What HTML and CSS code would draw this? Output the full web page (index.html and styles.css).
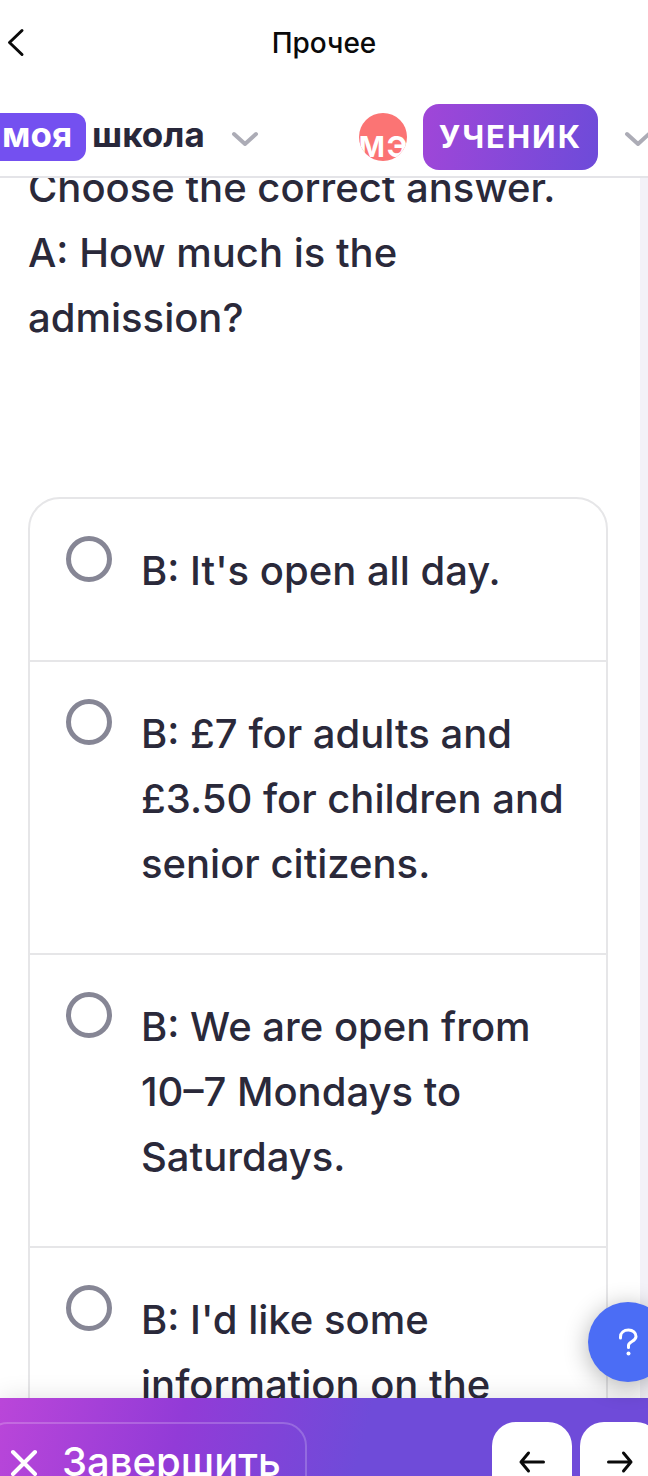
FILE: index.html
```html
<!DOCTYPE html>
<html lang="ru">
<head>
    <meta charset="UTF-8">
    <meta name="viewport" content="width=device-width, initial-scale=1.0">
    <title>Прочее</title>
    <link rel="stylesheet" href="styles.css">
</head>
<body>
    <div class="app">
        <header class="topbar">
            <button type="button" class="back" aria-label="Назад">
                <svg width="20" height="32" viewBox="0 0 20 32"><path d="M16 3.500L3.500 15.500L16 27.500"/></svg>
            </button>
            <h1>Прочее</h1>
        </header>

        <nav class="nav">
            <a href="#" class="logo"><span class="logo-badge">моя</span><span>школа</span></a>
            <button type="button" class="chevron" aria-label="Меню">
                <svg width="28" height="18" viewBox="0 0 28 18"><path d="M3 6L14 16L25 6"/></svg>
            </button>
            <div class="profile">
                <span class="avatar">МЭ</span>
                <span class="role">УЧЕНИК</span>
                <button type="button" class="chevron" aria-label="Профиль">
                    <svg width="28" height="18" viewBox="0 0 28 18"><path d="M3 6L14 16L25 6"/></svg>
                </button>
            </div>
        </nav>

        <main class="content">
            <div class="task">
                <p class="question">Choose the correct answer.<br>A: How much is the admission?</p>
                <form class="answers">
                    <label class="answer">
                        <input type="radio" name="answer" value="1">
                        <span>B: It's open all day.</span>
                    </label>
                    <label class="answer">
                        <input type="radio" name="answer" value="2">
                        <span>B: £7 for adults and £3.50 for children and senior citizens.</span>
                    </label>
                    <label class="answer">
                        <input type="radio" name="answer" value="3">
                        <span>B: We are open from 10–7 Mondays to Saturdays.</span>
                    </label>
                    <label class="answer">
                        <input type="radio" name="answer" value="4">
                        <span>B: I'd like some information on the</span>
                    </label>
                </form>
            </div>
        </main>

        <footer class="bottom">
            <button type="button" class="finish">
                <svg width="28" height="28" viewBox="0 0 28 28"><path d="M3 4L25 26M25 4L3 26"/></svg>
                Завершить
            </button>
            <div class="arrows">
                <button type="button" class="arrow" aria-label="Предыдущее задание">
                    <svg width="28" height="24" viewBox="0 0 28 24"><path d="M25.500 12H3M10.500 3L3 12L10.500 21"/></svg>
                </button>
                <button type="button" class="arrow" aria-label="Следующее задание">
                    <svg width="28" height="24" viewBox="0 0 28 24"><path d="M2.500 12H25M17.500 3L25 12L17.500 21"/></svg>
                </button>
            </div>
        </footer>

        <button type="button" class="help" aria-label="Помощь">
            <svg width="24" height="32" viewBox="0 0 24 32"><path d="M4.500 12V11C4.500 6.500 8 4 12.500 4S20 7 20 10.500C20 15.500 12.500 15.500 12.500 19.500V21.500"/><circle cx="12.500" cy="27.500" r="2"/></svg>
        </button>
    </div>
</body>
</html>
```

FILE: styles.css
```css
* {
    box-sizing: border-box;
}
body {
    margin: 0;
    font-family: Inter, "Liberation Sans", sans-serif;
    color: #2a293a;
    background: #f3f2f8;
}
button {
    padding: 0;
    border: none;
    background: none;
    font-family: inherit;
    cursor: pointer;
}
svg {
    display: block;
    fill: none;
    stroke: currentColor;
    stroke-linecap: round;
    stroke-linejoin: round;
}
.app {
    position: relative;
    display: flex;
    flex-direction: column;
    height: 100vh;
    overflow: hidden;
}

/* header */
.topbar {
    display: grid;
    grid-template-columns: 48px 1fr 48px;
    align-items: center;
    flex: none;
    height: 86px;
    background: #fff;
    color: #0a0a0a;
}
.back {
    padding-left: 6px;
    color: #0a0a0a;
}
.back svg {
    stroke-width: 3;
}
.topbar h1 {
    margin: 0;
    text-align: center;
    font-size: 28px;
    font-weight: 500;
}
.nav {
    display: flex;
    align-items: center;
    flex: none;
    height: 92px;
    padding-top: 12px;
    border-bottom: 2px solid #e4e4e8;
    background: #fff;
}
.logo {
    display: flex;
    align-items: center;
    gap: 6px;
    margin-left: -12px;
    font-size: 35px;
    font-weight: 700;
    color: #28273a;
    text-decoration: none;
}
.logo-badge {
    padding: 0 14px;
    border-radius: 12px;
    background: #7450f0;
    color: #fff;
}
.logo span {
    height: 48px;
    line-height: 42px;
}
.chevron {
    margin-left: 26px;
    color: #acacb6;
}
.chevron svg {
    stroke-width: 4;
}
.profile {
    display: flex;
    align-items: center;
    gap: 16px;
    margin-left: auto;
    margin-right: -4px;
    letter-spacing: 2px;
}
.profile .chevron {
    margin-left: 10px;
}
.avatar {
    width: 48px;
    height: 48px;
    border-radius: 50%;
    overflow: hidden;
    background: #fb7474;
    color: #fff;
    font-size: 28px;
    font-weight: 700;
    line-height: 68px;
}
.role {
    padding: 0 16px;
    border-radius: 16px;
    background: linear-gradient(100deg, #a046d8, #6d4bd9);
    color: #fff;
    font-size: 31px;
    font-weight: 700;
    line-height: 66px;
}

/* task */
.content {
    flex: 1;
    min-height: 0;
    overflow: hidden;
    margin-right: 8px;
    background: #fff;
}
.task {
    margin-top: -23px;
    padding: 0 32px 0 28px;
    font-size: 40px;
    font-weight: 500;
    line-height: 65px;
}
.question {
    margin: 0 0 147px;
}
.answers {
    border: 2px solid #e6e6e8;
    border-radius: 32px;
}
.answer {
    display: flex;
    align-items: flex-start;
    gap: 29px;
    padding: 37px 32px 57px 36px;
    border-bottom: 2px solid #e6e6e8;
}
.answer input {
    appearance: none;
    flex: none;
    width: 46px;
    height: 46px;
    margin: 0;
    border: 5px solid #868695;
    border-radius: 50%;
}
.answer input:checked {
    border-width: 14px;
    border-color: #7450f0;
}
.answer span {
    padding-top: 2px;
}

/* bottom bar */
.bottom {
    display: flex;
    justify-content: space-between;
    align-items: flex-start;
    flex: none;
    height: 78px;
    padding-top: 24px;
    background: linear-gradient(105deg, #ba46d9, #923bd7 28%, #6f4bd9 56%, #6f4bd9);
    box-shadow: 0 0 24px rgba(0, 0, 0, 0.12);
}
.finish {
    display: flex;
    align-items: center;
    gap: 24px;
    height: 80px;
    margin-left: -16px;
    padding: 0 24px;
    border: 2px solid rgba(255, 255, 255, 0.2);
    border-radius: 24px;
    color: #fff;
    font-size: 40px;
    font-weight: 500;
    line-height: 76px;
}
.finish svg {
    stroke-width: 4;
}
.arrows {
    display: flex;
    gap: 8px;
    margin-right: -12px;
}
.arrow {
    display: flex;
    align-items: center;
    justify-content: center;
    width: 80px;
    height: 80px;
    border-radius: 24px;
    background: #fff;
    color: #0a0a0a;
}
.arrow svg {
    stroke-width: 3;
}
.help {
    position: absolute;
    right: -20px;
    bottom: 94px;
    display: flex;
    align-items: center;
    justify-content: center;
    width: 80px;
    height: 80px;
    border-radius: 50%;
    background: #4b6df5;
    color: #fff;
    box-shadow: 0 4px 24px rgba(0, 0, 0, 0.3);
}
.help svg {
    stroke-width: 3;
}
.help circle {
    fill: #fff;
    stroke: none;
}
```
